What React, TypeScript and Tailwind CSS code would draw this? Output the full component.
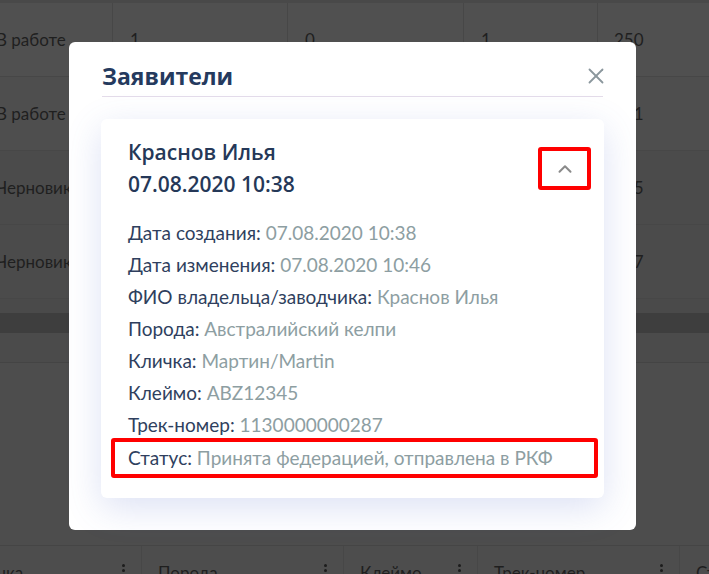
import { X, ChevronUp } from "lucide-react"

const rows = [
  { status: "В работе", a: "1", b: "0", c: "1", d: "250", bg: "bg-[#505050]" },
  { status: "В работе", a: "1", b: "0", c: "1", d: "251", bg: "bg-[#4e4e4e]" },
  { status: "Черновик", a: "1", b: "0", c: "1", d: "245", bg: "bg-[#4b4b4b]" },
  { status: "Черновик", a: "1", b: "0", c: "1", d: "247", bg: "bg-[#4b4b4b]" },
]

const details = [
  { label: "Дата создания:", value: "07.08.2020 10:38" },
  { label: "Дата изменения:", value: "07.08.2020 10:46" },
  { label: "ФИО владельца/заводчика:", value: "Краснов Илья" },
  { label: "Порода:", value: "Австралийский келпи" },
  { label: "Кличка:", value: "Мартин/Martin" },
  { label: "Клеймо:", value: "ABZ12345" },
  { label: "Трек-номер:", value: "1130000000287" },
]

const headers = [
  { title: "Кличка", w: "w-[142px]", shift: "ml-[-50px]" },
  { title: "Порода", w: "w-[202px]", shift: "" },
  { title: "Клеймо", w: "w-[134px]", shift: "" },
  { title: "Трек-номер", w: "w-[202px]", shift: "" },
  { title: "Статус", w: "w-[120px]", shift: "" },
]

function Dots() {
  return (
    <span className="flex flex-col gap-[2px] items-center">
      <span className="w-[3px] h-[3px] rounded-full bg-[#1c1c1c]" />
      <span className="w-[3px] h-[3px] rounded-full bg-[#1c1c1c]" />
      <span className="w-[3px] h-[3px] rounded-full bg-[#1c1c1c]" />
    </span>
  )
}

export default function App() {
  return (
    <div className="relative w-[709px] h-[574px] overflow-hidden bg-[#4d4d4d] font-['Lato',sans-serif]">
      {/* table behind the overlay */}
      <div className="flex flex-col text-[17px] text-[#1f1f1f]">
        <div className="h-[3px] bg-[#494949]" />
        {rows.map((r, i) => (
          <div key={i} className={`flex h-[74px] items-center border-b border-[#474747] ${r.bg}`}>
            <div className="w-[113px] h-full flex items-center border-r border-[#474747]">
              <span className="ml-[-4px] whitespace-nowrap">{r.status}</span>
            </div>
            <div className="w-[175px] h-full flex items-center pl-[17px] border-r border-[#474747]">{r.a}</div>
            <div className="w-[176px] h-full flex items-center pl-[17px] border-r border-[#474747]">{r.b}</div>
            <div className="w-[134px] h-full flex items-center pl-[17px] border-r border-[#474747]">{r.c}</div>
            <div className="flex-1 h-full flex items-center pl-[16px]">{r.d}</div>
          </div>
        ))}
        <div className="h-[14px] bg-[#4a4a4a]" />
        <div className="h-[20px] bg-[#3e3e3e]" />
        <div className="h-[30px] bg-[#4b4b4b] border-b border-[#444444]" />
        <div className="h-[183px] bg-[#4d4d4d] border-b border-[#454545]" />
        <div className="flex h-[40px] bg-[#4d4d4d]">
          {headers.map((h, i) => (
            <div key={i} className={`${h.w} shrink-0 flex items-start pt-[14px] pl-[16px] pr-[16px] justify-between border-r border-[#474747]`}>
              <span className={`whitespace-nowrap ${h.shift}`}>{h.title}</span>
              <span className="mt-[4px]">
                <Dots />
              </span>
            </div>
          ))}
        </div>
      </div>

      {/* modal */}
      <div className="absolute left-[69px] top-[42px] w-[567px] h-[488px] bg-white rounded-[6px] px-[32px] pt-[22px] pb-[32px]">
        <div className="flex items-center justify-between h-[24px] px-px">
          <h2 className="font-['Open_Sans',sans-serif] text-[23px] leading-[24px] font-bold text-[#253a5e]">Заявители</h2>
          <X className="w-[26px] h-[26px] text-[#8b979d] mr-[-6px]" strokeWidth={1.7} />
        </div>
        <div className="mt-[8px] mx-px border-t border-[#e4dcea]" />

        <div className="mt-[22px] h-[379px] bg-white rounded-[6px] px-[10px] pt-[17px] pb-[20px] shadow-[0_10px_36px_rgba(80,105,200,0.2)]">
          <div className="flex items-start justify-between pl-[17px]">
            <div className="font-['Open_Sans',sans-serif] text-[21px] leading-[32px] font-semibold text-[#253858]">
              <div>Краснов Илья</div>
              <div>07.08.2020 10:38</div>
            </div>
            <button className="mt-[11px] mr-[3px] w-[53px] h-[43px] border-[4px] border-[#ff0000] rounded-[3px] flex items-center justify-center">
              <ChevronUp className="w-[22px] h-[22px] text-[#8a8a8a]" strokeWidth={2.2} />
            </button>
          </div>

          <div className="mt-[17px] text-[19px] leading-[32px]">
            {details.map((d) => (
              <div key={d.label} className="pl-[17px] whitespace-nowrap">
                <span className="text-[#2f3f5e]">{d.label}</span>{" "}
                <span className="text-[#8d9ea2]">{d.value}</span>
              </div>
            ))}
            <div className="mt-[-3px] mr-[-4px] border-[4px] border-[#ff0000] rounded-[3px] pl-[13px] whitespace-nowrap">
              <span className="text-[#2f3f5e]">Статус:</span>{" "}
              <span className="text-[#8d9ea2]">Принята федерацией, отправлена в РКФ</span>
            </div>
          </div>
        </div>
      </div>
    </div>
  )
}
